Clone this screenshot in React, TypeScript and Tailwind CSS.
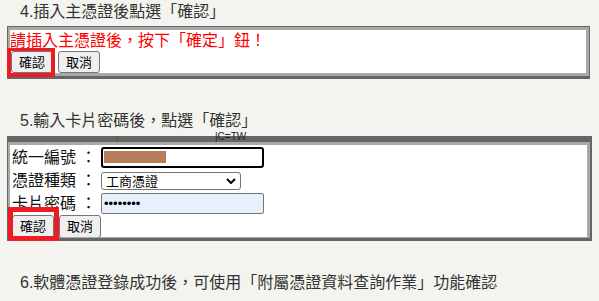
import React from "react";

function Btn({ children, h = "h-[22px]" }: { children: React.ReactNode; h?: string }) {
  return (
    <div
      className={`w-[42px] ${h} flex items-center justify-center border border-[#767676] rounded-[3px] bg-[#efefef] text-[13px] text-black leading-none`}
    >
      {children}
    </div>
  );
}

export default function App() {
  return (
    <div className="w-[599px] h-[301px] overflow-hidden bg-[#f3f3ef] text-[#333] [font-family:Liberation_Sans,Noto_Sans_CJK_TC,sans-serif]">
      <div className="pl-[20px] h-[26px] text-[16px] leading-[24px]">4.插入主憑證後點選「確認」</div>

      <div className="relative ml-[7px] w-[583px] h-[53px] border-t border-l border-r border-b-[3px] border-[#666] bg-[#a9a9a9] pt-[3px] pl-[2px] pr-[3px] pb-[3px]">
        <div className="bg-white h-full">
          <div className="h-[21px] text-[16px] leading-[21px] text-[#ff0000]">請插入主憑證後，按下「確定」鈕！</div>
          <div className="flex gap-[5px] pl-[1px]">
            <Btn>確認</Btn>
            <Btn>取消</Btn>
          </div>
        </div>
        <div className="absolute left-[-1px] top-[21px] w-[48px] h-[29px] border-[4px] border-t-[3px] border-[#ed1c24]" />
      </div>

      <div className="pl-[20px] pt-[30px] pb-[3px] text-[16px] leading-[24px]">5.輸入卡片密碼後，點選「確認」</div>

      <div className="relative ml-[7px] w-[585px] h-[105px] border-t-[6px] border-l border-r-[2px] border-b-[3px] border-[#666] bg-[#a9a9a9] pt-[3px] pl-[2px] pr-[3px] pb-[1px]">
        <div className="absolute left-[109px] top-[-6px] w-[1px] h-[6px] bg-[#7a4a30]" />
        <div className="absolute left-[207px] top-[-10px] text-[10px] leading-[10px] text-[#222] whitespace-nowrap">|C=TW</div>
        <div className="bg-white h-full overflow-hidden">
          <div className="grid grid-cols-[89px_auto] pl-[2px] pt-[2px] text-[16px] text-[#111] leading-none">
            <div className="h-[21px] flex items-center">統一編號 ：</div>
            <div className="h-[21px]">
              <div className="w-[163px] h-[21px] border-2 border-black rounded-[3px] bg-white pl-[1px] pt-[2px]">
                <div className="w-[62px] h-[12px] bg-[#b97c5b]" />
              </div>
            </div>
            <div className="h-[18px] mt-[4px] flex items-center">憑證種類 ：</div>
            <div className="h-[18px] mt-[4px]">
              <div className="w-[140px] h-[18px] border border-[#767676] rounded-[3px] bg-white flex items-center justify-between pl-[4px] pr-[4px]">
                <span className="text-[13px] text-black leading-none">工商憑證</span>
                <svg width="10" height="6" viewBox="0 0 10 6">
                  <path d="M1 1 L5 5 L9 1" fill="none" stroke="#000" strokeWidth="2" />
                </svg>
              </div>
            </div>
            <div className="h-[21px] mt-[3px] flex items-center">卡片密碼 ：</div>
            <div className="h-[21px] mt-[3px]">
              <div className="w-[163px] h-[21px] border border-[#767676] rounded-[2px] bg-[#e8f0fe] flex items-center pl-[2px]">
                <span className="text-[13px] text-black leading-none">••••••••</span>
              </div>
            </div>
          </div>
          <div className="flex gap-[5px] pl-[2px] mt-[1px]">
            <Btn h="h-[23px]">確認</Btn>
            <Btn h="h-[23px]">取消</Btn>
          </div>
        </div>
        <div className="absolute left-[0px] top-[65px] w-[51px] h-[34px] border-[5px] border-[#ed1c24]" />
      </div>

      <div className="pl-[20px] pt-[30px] text-[16px] leading-[24px]">6.軟體憑證登錄成功後，可使用「附屬憑證資料查詢作業」功能確認</div>
    </div>
  );
}
